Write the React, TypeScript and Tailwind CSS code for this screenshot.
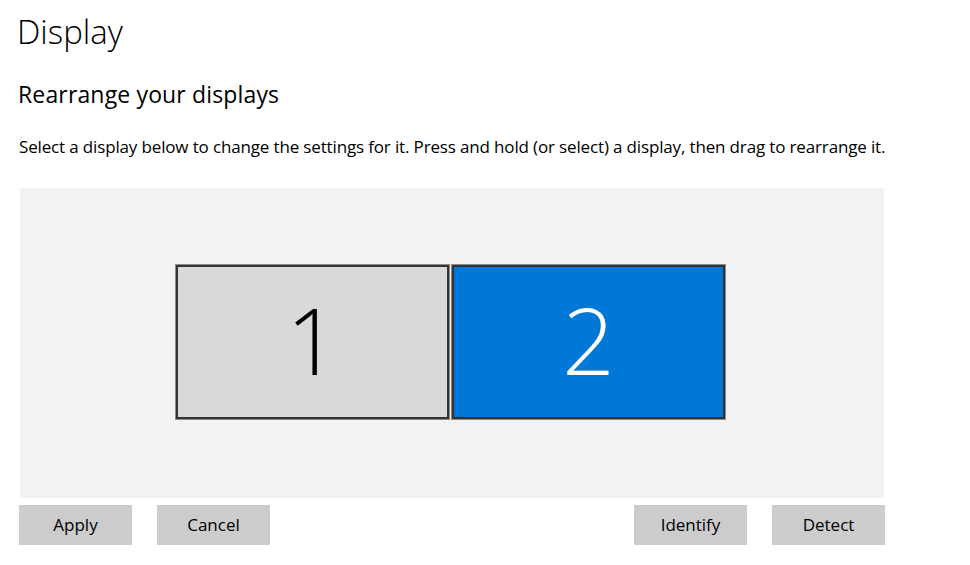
import React from "react";

function Monitor({ label, active }: { label: string; active?: boolean }) {
  return (
    <div className="border border-[#8a8a8a] w-[275px] h-[156px]">
      <div
        className={
          active
            ? "w-full h-full border-2 border-[#333333] bg-[#0078d7] text-white flex items-center justify-center"
            : "w-full h-full border-2 border-[#333333] bg-[#d9d9d9] text-black flex items-center justify-center"
        }
      >
        <span className="text-[92px] font-extralight leading-none -mt-1">{label}</span>
      </div>
    </div>
  );
}

function Btn({ children }: { children: React.ReactNode }) {
  return (
    <button className="w-[113px] h-[40px] bg-[#cccccc] text-[17px] text-black flex items-center justify-center">
      {children}
    </button>
  );
}

export default function App() {
  return (
    <main
      className="w-[970px] h-[565px] bg-white text-black overflow-hidden pl-[19px]"
      style={{ fontFamily: '"Open Sans", "Noto Sans", sans-serif' }}
    >
      <h1 className="text-[33px] font-light leading-none pt-[15px] -ml-[2px]">Display</h1>
      <h2 className="text-[23px] leading-none mt-[35px] -ml-[1px] tracking-[0.15px]">Rearrange your displays</h2>
      <p className="text-[17px] leading-none mt-[32px] tracking-[-0.15px]">
        Select a display below to change the settings for it. Press and hold (or select) a display, then drag to rearrange it.
      </p>

      <div className="mt-[33px] ml-[1px] w-[864px] h-[310px] bg-[#f2f2f2] flex items-center justify-center gap-[1px] pb-[2px] pr-[3px]">
        <Monitor label="1" />
        <Monitor label="2" active />
      </div>

      <div className="mt-[7px] w-[866px] flex justify-between">
        <div className="flex gap-[25px]">
          <Btn>Apply</Btn>
          <Btn>Cancel</Btn>
        </div>
        <div className="flex gap-[25px]">
          <Btn>Identify</Btn>
          <Btn>Detect</Btn>
        </div>
      </div>
    </main>
  );
}
